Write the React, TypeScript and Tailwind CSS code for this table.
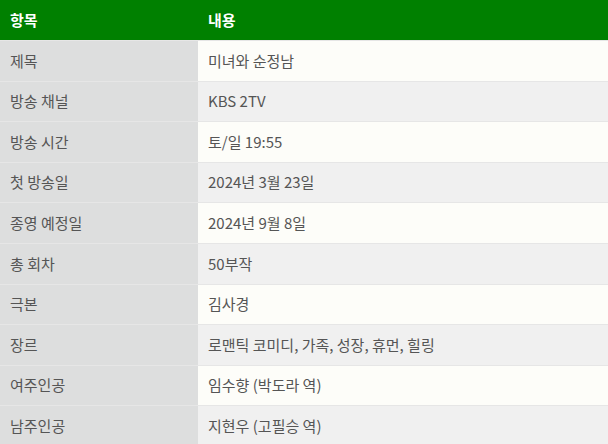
import React from "react";

const rows: [string, string][] = [
  ["제목", "미녀와 순정남"],
  ["방송 채널", "KBS 2TV"],
  ["방송 시간", "토/일 19:55"],
  ["첫 방송일", "2024년 3월 23일"],
  ["종영 예정일", "2024년 9월 8일"],
  ["총 회차", "50부작"],
  ["극본", "김사경"],
  ["장르", "로맨틱 코미디, 가족, 성장, 휴먼, 힐링"],
  ["여주인공", "임수향 (박도라 역)"],
  ["남주인공", "지현우 (고필승 역)"],
];

export default function App() {
  return (
    <div
      className="w-[608px] h-[444px] overflow-hidden bg-white text-[15px]"
      style={{ fontFamily: '"Noto Sans CJK KR", sans-serif' }}
    >
      <div className="flex h-[40px] bg-[#008000] text-white font-bold items-center">
        <div className="w-[198px] px-[10px]">항목</div>
        <div className="flex-1 px-[10px]">내용</div>
      </div>
      {rows.map(([k, v], i) => (
        <div
          key={k}
          className="flex h-[40.6px] border-t border-[#e6e6e6] text-[#555555]"
        >
          <div className="w-[198px] px-[10px] flex items-center bg-[#dddede]">{k}</div>
          <div
            className={`flex-1 px-[10px] flex items-center ${
              i % 2 === 0 ? "bg-[#fdfdf9]" : "bg-[#f0f0f0]"
            }`}
          >
            {v}
          </div>
        </div>
      ))}
    </div>
  );
}
